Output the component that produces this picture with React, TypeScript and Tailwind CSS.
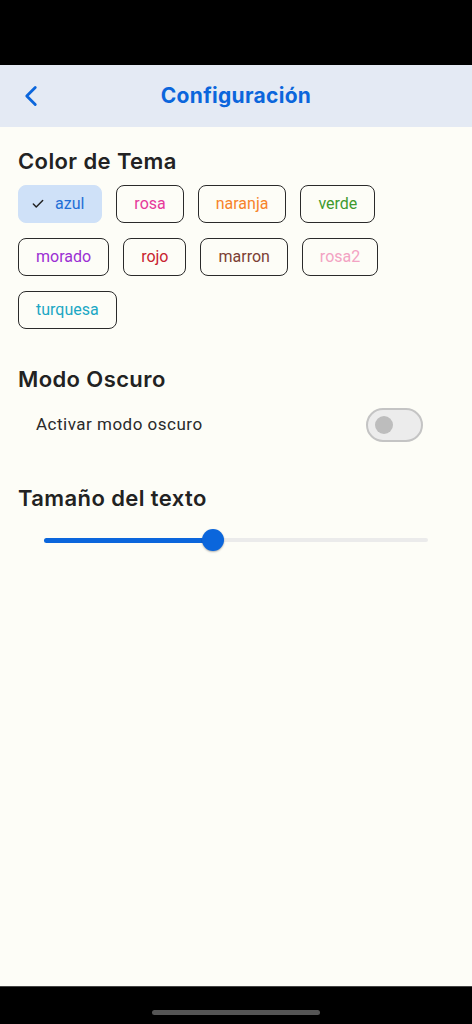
import { Check, ChevronLeft } from 'lucide-react';

const chips = [
  { label: 'azul', color: 'text-[#1f6fd6]', selected: true },
  { label: 'rosa', color: 'text-[#e6399b]' },
  { label: 'naranja', color: 'text-[#f7832a]' },
  { label: 'verde', color: 'text-[#3e9a2e]' },
  { label: 'morado', color: 'text-[#9b2fd3]' },
  { label: 'rojo', color: 'text-[#c8232f]' },
  { label: 'marron', color: 'text-[#7b4034]' },
  { label: 'rosa2', color: 'text-[#f3a3c3]' },
  { label: 'turquesa', color: 'text-[#1ba7c4]' },
];

export default function App() {
  return (
    <div className="flex h-[1024px] w-[472px] flex-col bg-[#fdfdf7] font-['Inter',sans-serif] text-[#222]">
      {/* Status bar */}
      <div className="h-[65px] bg-black" />

      {/* Header */}
      <div className="relative flex h-[62px] items-center justify-center bg-[#e4eaf4]">
        <button className="absolute left-[14px] text-[#0b66dc]" aria-label="Volver">
          <ChevronLeft className="h-[34px] w-[34px]" strokeWidth={2} />
        </button>
        <h1 className="text-[21px] font-bold tracking-[0.3px] text-[#0b66dc]">Configuración</h1>
      </div>

      <div className="flex-1 px-[18px]">
        {/* Color de Tema */}
        <h2 className="mt-[20px] text-[22px] font-semibold leading-[28px] tracking-[0.4px]">Color de Tema</h2>
        <div className="mt-[10px] flex flex-wrap gap-x-[14px] gap-y-[15px]">
          {chips.map((c) => (
            <div
              key={c.label}
              className={
                c.selected
                  ? 'flex h-[38px] items-center gap-[10px] rounded-[8px] border-[1.5px] border-[#cfe1f8] bg-[#cfe1f8] pl-[12px] pr-[17px]'
                  : 'flex h-[38px] items-center rounded-[8px] border-[1.5px] border-[#2a2a2a] px-[17px]'
              }
            >
              {c.selected && <Check className="h-[14px] w-[14px] text-[#222]" strokeWidth={2.5} />}
              <span className={`font-['Roboto',sans-serif] text-[16px] ${c.color}`}>{c.label}</span>
            </div>
          ))}
        </div>

        {/* Modo Oscuro */}
        <h2 className="mt-[36px] text-[22px] font-semibold leading-[28px] tracking-[0.4px]">Modo Oscuro</h2>
        <div className="mt-[15px] flex items-center justify-between pl-[18px] pr-[31px]">
          <span className="font-['Roboto',sans-serif] text-[17px] tracking-[0.5px] text-[#2a2a2a]">Activar modo oscuro</span>
          <div className="flex h-[34px] w-[57px] items-center rounded-full border-2 border-[#c4c4c4] bg-[#ececec] pl-[7px]">
            <div className="h-[18px] w-[18px] rounded-full bg-[#bdbdbd]" />
          </div>
        </div>

        {/* Tamaño del texto */}
        <h2 className="mt-[42px] text-[22px] font-semibold leading-[28px] tracking-[0.4px]">Tamaño del texto</h2>
        <div className="relative mt-[16px] ml-[26px] mr-[26px] flex h-[24px] items-center">
          <div className="h-[4px] w-full rounded-full bg-[#ebebeb]" />
          <div className="absolute left-0 h-[5px] w-[170px] rounded-full bg-[#0b66dc]" />
          <div className="absolute left-[158px] h-[22px] w-[22px] rounded-full bg-[#0b66dc] shadow-[0_1px_2px_rgba(0,0,0,0.3)]" />
        </div>
      </div>

      {/* Home indicator */}
      <div className="flex h-[38px] items-center justify-center border-t border-[#444] bg-black">
        <div className="mt-[14px] h-[5px] w-[168px] rounded-full bg-[#555]" />
      </div>
    </div>
  );
}
